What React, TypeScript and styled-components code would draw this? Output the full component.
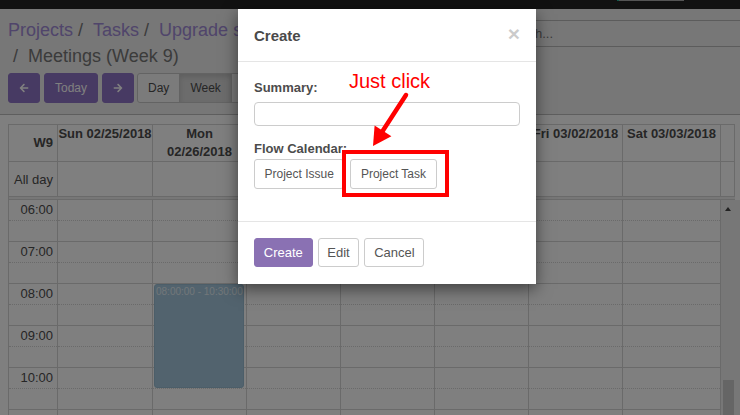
import React from "react";
import styled, { createGlobalStyle, css } from "styled-components";
import { FaArrowLeft, FaArrowRight } from "react-icons/fa";

const GlobalStyle = createGlobalStyle`
  html, body { margin: 0; padding: 0; }
  body {
    font-family: "Liberation Sans", Arial, Helvetica, sans-serif;
    background: #ffffff;
    overflow: hidden;
  }
  * { box-sizing: border-box; }
`;

const Screen = styled.div`
  position: relative;
  width: 740px;
  height: 415px;
  overflow: hidden;
  background: #ffffff;
`;

const NavBar = styled.div`
  height: 9px;
  background: #222222;
  display: flex;
  align-items: flex-start;
`;

const NavPill = styled.span`
  display: block;
  margin-left: 617px;
  width: 67px;
  height: 1px;
  background: #a8a8a8;
  border-left: 2px solid #21b799;
`;

const ControlPanel = styled.div`
  display: grid;
  grid-template-columns: 1fr 245px;
  row-gap: 4px;
  padding: 9px 0 11px 8px;
  background: #eeeeee;
  border-bottom: 1px solid #bcbcbc;
`;

const Breadcrumb = styled.ol`
  margin: 0;
  padding: 0 20px 0 0;
  list-style: none;
  font-size: 18px;
  line-height: 1.42857;
  & > li + li::before {
    content: "/\\00a0";
    padding: 0 5px;
    color: #777777;
  }
`;

const Crumb = styled.li<{ $active?: boolean }>`
  display: inline-block;
  color: ${(p) => (p.$active ? "#777777" : "#a08ad6")};
`;

const SearchBox = styled.div`
  align-self: start;
  margin-top: 2px;
  height: 27px;
  display: flex;
  align-items: center;
  padding-left: 6px;
  border-top: 1px solid #b8b8b8;
  border-bottom: 1px solid #b8b8b8;
  font-size: 13px;
  color: #777777;
`;

const ButtonsRow = styled.div`
  grid-column: 1 / -1;
  display: flex;
  gap: 4px;
`;

const NavButton = styled.button`
  display: flex;
  align-items: center;
  justify-content: center;
  height: 30px;
  padding: 5px 10px;
  font-family: inherit;
  font-size: 12px;
  line-height: 18px;
  color: #ffffff;
  background: #8f74c6;
  border: 1px solid #8f74c6;
  border-radius: 3px;
`;

const ViewGroup = styled.div`
  display: flex;
  margin-left: -1px;
`;

const ViewButton = styled.button<{ $active?: boolean; $first?: boolean }>`
  height: 30px;
  padding: 5px 10px;
  margin-left: ${(p) => (p.$first ? "0" : "-1px")};
  font-family: inherit;
  font-size: 12px;
  line-height: 18px;
  color: #4c4c4c;
  background: ${(p) => (p.$active ? "#d8d8d8" : "#f6f6f6")};
  border: 1px solid #c6c6c6;
  border-radius: ${(p) => (p.$first ? "3px 0 0 3px" : "0")};
  box-shadow: ${(p) => (p.$active ? "inset 0 3px 5px rgba(0,0,0,0.125)" : "none")};
`;

const CalendarArea = styled.div`
  padding: 9px 0 0 8px;
`;

const HeaderGrid = styled.div`
  display: grid;
  grid-template-columns: 49px 95px repeat(5, 94px) 98px 14px;
  border-top: 1px solid #d4d4d4;
  border-left: 1px solid #d4d4d4;
  width: max-content;
  color: #4c4c4c;
  font-size: 13px;
`;

const HeadCell = styled.div<{ $axis?: boolean }>`
  height: 37px;
  border-right: 1px solid #d4d4d4;
  border-bottom: 1px solid #d4d4d4;
  font-weight: bold;
  line-height: 18px;
  ${(p) =>
    p.$axis
      ? css`
          display: flex;
          align-items: center;
          justify-content: flex-end;
          padding-right: 4px;
        `
      : css`
          text-align: center;
        `}
`;

const AllDayCell = styled.div<{ $axis?: boolean }>`
  height: 35px;
  border-right: 1px solid #d4d4d4;
  border-bottom: 1px solid #d4d4d4;
  ${(p) =>
    p.$axis &&
    css`
      display: flex;
      align-items: center;
      justify-content: flex-end;
      padding-right: 4px;
    `}
`;

const Divider = styled.div`
  grid-column: 1 / -1;
  height: 3px;
  background: #eeeeee;
  border-bottom: 1px solid #d4d4d4;
`;

const TimeGrid = styled.div`
  display: flex;
  height: 216px;
  overflow: hidden;
  border-left: 1px solid #d4d4d4;
  color: #4c4c4c;
  font-size: 13px;
`;

const Column = styled.div<{ $w: number }>`
  position: relative;
  flex: 0 0 ${(p) => p.$w}px;
  border-right: 1px solid #d4d4d4;
`;

const Slot = styled.div<{ $half?: boolean; $axis?: boolean }>`
  height: 21px;
  border-bottom: 1px ${(p) => (p.$half ? "dotted" : "solid")} #d4d4d4;
  ${(p) =>
    p.$axis &&
    css`
      display: flex;
      align-items: center;
      justify-content: flex-end;
      padding-right: 4px;
      line-height: 20px;
    `}
`;

const EventBlock = styled.div`
  position: absolute;
  top: 84px;
  left: 1px;
  right: 2px;
  height: 104px;
  background: #a4c6dc;
  border: 1px solid #98bdd3;
  border-radius: 3px;
  padding: 1px 1px;
  font-size: 10px;
  line-height: 12px;
  color: #e2edf3;
  white-space: nowrap;
  overflow: hidden;
`;

const ScrollTrack = styled.div`
  flex: 0 0 20px;
  display: flex;
  flex-direction: column;
  background: #eeeeee;
`;

const ScrollArrow = styled.span`
  display: block;
  width: 0;
  height: 0;
  margin: 7px 0 0 4px;
  border-left: 3.5px solid transparent;
  border-right: 3.5px solid transparent;
  border-bottom: 4px solid #444444;
`;

const ScrollThumb = styled.span`
  display: block;
  margin: auto 0 0 2px;
  width: 11px;
  height: 36px;
  background: #cbcbcb;
`;

const Backdrop = styled.div`
  position: absolute;
  inset: 0;
  background: rgba(0, 0, 0, 0.5);
`;

const Modal = styled.div`
  position: absolute;
  top: 9px;
  left: 238px;
  width: 298px;
  background: #ffffff;
  box-shadow: 0 5px 15px rgba(0, 0, 0, 0.5);
  color: #4c4c4c;
`;

const ModalHeader = styled.div`
  display: flex;
  justify-content: space-between;
  align-items: center;
  padding: 16px 16px 14px;
  border-bottom: 1px solid #e5e5e5;
`;

const ModalTitle = styled.h4`
  margin: 0;
  font-size: 15px;
  font-weight: bold;
  line-height: 22px;
  color: #4a4a4a;
`;

const CloseButton = styled.span`
  font-size: 21px;
  font-weight: bold;
  line-height: 1;
  color: #000000;
  opacity: 0.2;
  margin-top: -6px;
`;

const ModalBody = styled.div`
  padding: 17px 16px 32px;
`;

const FieldLabel = styled.label<{ $tight?: boolean }>`
  display: block;
  font-size: 13px;
  font-weight: bold;
  line-height: 18px;
  margin-bottom: ${(p) => (p.$tight ? "1px" : "5px")};
`;

const TextInput = styled.input`
  display: block;
  width: 100%;
  height: 24px;
  margin: 0 0 14px;
  border: 1px solid #cccccc;
  border-radius: 4px;
  background: #ffffff;
`;

const ChoiceRow = styled.div`
  display: flex;
  gap: 6px;
`;

const ChoiceButton = styled.button`
  padding: 7px 9.5px 6px;
  font-family: inherit;
  font-size: 12px;
  line-height: 15px;
  color: #555555;
  background: #ffffff;
  border: 1px solid #cccccc;
  border-radius: 3px;
`;

const ModalFooter = styled.div`
  display: flex;
  gap: 5px;
  padding: 16px 16px 17px;
  border-top: 1px solid #e5e5e5;
`;

const FooterButton = styled.button<{ $primary?: boolean }>`
  padding: 5px 8.75px;
  font-family: inherit;
  font-size: 13px;
  line-height: 17px;
  border-radius: 3px;
  ${(p) =>
    p.$primary
      ? css`
          color: #ffffff;
          background: #8a71b3;
          border: 1px solid #8a71b3;
        `
      : css`
          color: #555555;
          background: #ffffff;
          border: 1px solid #cccccc;
        `}
`;

const Callout = styled.div`
  position: absolute;
  left: 349px;
  top: 70px;
  font-size: 20px;
  line-height: 23px;
  color: #ff0000;
  white-space: nowrap;
`;

const Highlight = styled.div`
  position: absolute;
  left: 342px;
  top: 150px;
  width: 107px;
  height: 47px;
  border: 4px solid #ff0000;
`;

const ArrowMark = styled.svg`
  position: absolute;
  left: 360px;
  top: 90px;
  overflow: visible;
`;

const dayHeaders = [
  { w: 95, label: "Sun 02/25/2018" },
  { w: 94, label: "Mon 02/26/2018" },
  { w: 94, label: "Tue 02/27/2018" },
  { w: 94, label: "Wed 02/28/2018" },
  { w: 94, label: "Thu 03/01/2018" },
  { w: 94, label: "Fri 03/02/2018" },
  { w: 98, label: "Sat 03/03/2018" },
];

const hours = ["06:00", "07:00", "08:00", "09:00", "10:00", ""];

const slotList = hours.flatMap((h, i) => [
  { key: i + "a", label: h, half: true },
  { key: i + "b", label: "", half: false },
]);

export default function App() {
  return (
    <>
      <GlobalStyle />
      <Screen>
        <NavBar>
          <NavPill />
        </NavBar>
        <ControlPanel>
          <Breadcrumb>
            <Crumb>Projects</Crumb>
            <Crumb>Tasks</Crumb>
            <Crumb>Upgrade subscription</Crumb>
            <Crumb $active>Meetings (Week 9)</Crumb>
          </Breadcrumb>
          <SearchBox>Search...</SearchBox>
          <ButtonsRow>
            <NavButton aria-label="Previous">
              <FaArrowLeft size={10} />
            </NavButton>
            <NavButton>Today</NavButton>
            <NavButton aria-label="Next">
              <FaArrowRight size={10} />
            </NavButton>
            <ViewGroup>
              <ViewButton $first>Day</ViewButton>
              <ViewButton $active>Week</ViewButton>
              <ViewButton>Month</ViewButton>
            </ViewGroup>
          </ButtonsRow>
        </ControlPanel>

        <CalendarArea>
          <HeaderGrid>
            <HeadCell $axis>W9</HeadCell>
            {dayHeaders.map((d) => (
              <HeadCell key={d.label}>{d.label}</HeadCell>
            ))}
            <HeadCell />
            <AllDayCell $axis>All day</AllDayCell>
            {dayHeaders.map((d) => (
              <AllDayCell key={d.label} />
            ))}
            <AllDayCell />
            <Divider />
          </HeaderGrid>
          <TimeGrid>
            <Column $w={49}>
              {slotList.map((s) => (
                <Slot key={s.key} $half={s.half} $axis>
                  {s.label}
                </Slot>
              ))}
            </Column>
            {dayHeaders.map((d, i) => (
              <Column key={d.label} $w={d.w}>
                {slotList.map((s) => (
                  <Slot key={s.key} $half={s.half} />
                ))}
                {i === 1 && <EventBlock>08:00:00 - 10:30:00</EventBlock>}
              </Column>
            ))}
            <ScrollTrack>
              <ScrollArrow />
              <ScrollThumb />
            </ScrollTrack>
          </TimeGrid>
        </CalendarArea>

        <Backdrop />

        <Modal>
          <ModalHeader>
            <ModalTitle>Create</ModalTitle>
            <CloseButton>×</CloseButton>
          </ModalHeader>
          <ModalBody>
            <FieldLabel>Summary:</FieldLabel>
            <TextInput type="text" />
            <FieldLabel $tight>Flow Calendar:</FieldLabel>
            <ChoiceRow>
              <ChoiceButton>Project Issue</ChoiceButton>
              <ChoiceButton>Project Task</ChoiceButton>
            </ChoiceRow>
          </ModalBody>
          <ModalFooter>
            <FooterButton $primary>Create</FooterButton>
            <FooterButton>Edit</FooterButton>
            <FooterButton>Cancel</FooterButton>
          </ModalFooter>
        </Modal>

        <Callout>Just click</Callout>
        <ArrowMark width="56" height="60" viewBox="0 0 56 60">
          <line x1="46" y1="5" x2="22" y2="42" stroke="#ff0000" strokeWidth="4.5" strokeLinecap="round" />
          <polygon points="13,56 14.6,35.4 31.4,46.2" fill="#ff0000" />
        </ArrowMark>
        <Highlight />
      </Screen>
    </>
  );
}
